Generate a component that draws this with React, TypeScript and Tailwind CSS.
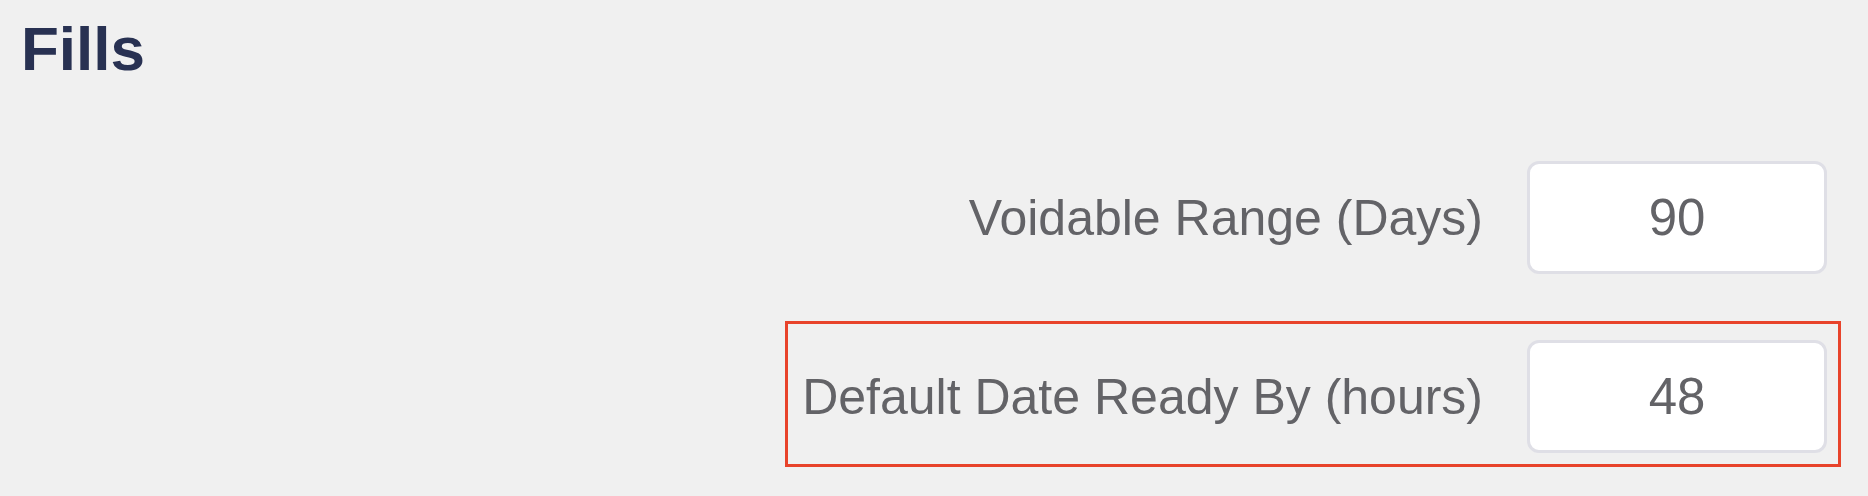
import { useState } from 'react';

interface SettingRowProps {
  label: string;
  value: string;
  highlighted?: boolean;
  onChange: (v: string) => void;
}

function SettingRow({ label, value, highlighted, onChange }: SettingRowProps) {
  return (
    <div
      className={`flex items-center gap-[44px] border-[3px] pl-[14px] pr-[11px] pt-[16px] pb-[11px] ${
        highlighted ? 'border-[#e8432b]' : 'border-transparent'
      }`}
    >
      <label className="text-[50px] leading-none text-[#636367] whitespace-nowrap">{label}</label>
      <input
        value={value}
        onChange={(e) => onChange(e.target.value)}
        className="w-[300px] h-[113px] rounded-[12px] border-[3px] border-[#dfdfe6] bg-white text-center text-[51px] text-[#636367] outline-none font-['Liberation_Sans',Arial,sans-serif]"
      />
    </div>
  );
}

export default function App() {
  const [voidable, setVoidable] = useState('90');
  const [readyBy, setReadyBy] = useState('48');

  return (
    <div className="h-[496px] overflow-hidden bg-[#f0f0f0] pt-[18px] font-['Liberation_Sans',Arial,sans-serif]">
      <h1 className="pl-[21px] text-[62px] font-bold leading-none text-[#283152]">Fills</h1>

      {/* Campos */}
      <div className="flex flex-col items-end pr-[27px] mt-[62px] gap-[33px]">
        <SettingRow label="Voidable Range (Days)" value={voidable} onChange={setVoidable} />
        <SettingRow label="Default Date Ready By (hours)" value={readyBy} onChange={setReadyBy} highlighted />
      </div>
    </div>
  );
}
